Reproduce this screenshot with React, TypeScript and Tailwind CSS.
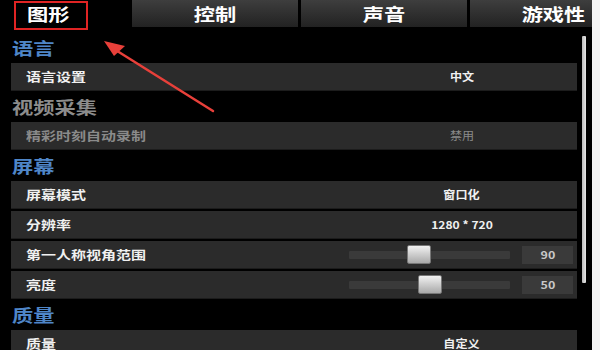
const font = { fontFamily: '"Noto Sans CJK SC", "Noto Sans", sans-serif' };

type Item =
  | { kind: "heading"; label: string; muted?: boolean }
  | { kind: "row"; label: string; value: string; muted?: boolean }
  | { kind: "slider"; label: string; value: number; pos: number };

const items: Item[] = [
  { kind: "heading", label: "语言" },
  { kind: "row", label: "语言设置", value: "中文" },
  { kind: "heading", label: "视频采集", muted: true },
  { kind: "row", label: "精彩时刻自动录制", value: "禁用", muted: true },
  { kind: "heading", label: "屏幕" },
  { kind: "row", label: "屏幕模式", value: "窗口化" },
  { kind: "row", label: "分辨率", value: "1280 * 720" },
  { kind: "slider", label: "第一人称视角范围", value: 90, pos: 58 },
  { kind: "slider", label: "亮度", value: 50, pos: 69 },
  { kind: "heading", label: "质量" },
  { kind: "row", label: "质量", value: "自定义" },
];

const tabs = ["控制", "声音", "游戏性"];

const Slider = ({ value, pos }: { value: number; pos: number }) => (
  <div className="flex items-center h-full">
    <div className="relative w-[161px] h-[8px] bg-[#3a3a3a] rounded-[1px]">
      <div
        className="absolute top-[-6px] w-[24px] h-[19px] rounded-[2px] bg-gradient-to-b from-[#f2f2f2] to-[#a9a9a9] border border-[#777]"
        style={{ left: pos }}
      />
    </div>
    <div className="ml-[12px] w-[51px] h-[18px] bg-[#3a3a3a] flex items-center justify-center text-[10px] font-bold text-[#c8c8c8]">
      <span className="inline-block scale-x-125">{value}</span>
    </div>
  </div>
);

export default function App() {
  return (
    <div className="relative w-[600px] h-[350px] overflow-hidden flex bg-[#f5f5f5]" style={font}>
      <div className="w-[592px] h-full bg-black flex flex-col overflow-hidden">
        {/* tab bar */}
        <div className="flex h-[27px] shrink-0 gap-[3px]">
          <div className="w-[129px] shrink-0 bg-black flex items-center pl-[27px] text-[17px] font-bold text-white">
            <span className="inline-block scale-x-125 origin-left">图形</span>
          </div>
          {tabs.map((t) => (
            <div
              key={t}
              className="w-[166px] shrink-0 bg-gradient-to-b from-[#3e3e3e] to-[#222] flex items-center justify-center text-[17px] font-bold text-white"
            >
              <span className="inline-block scale-x-125">{t}</span>
            </div>
          ))}
        </div>

        <div className="flex flex-1 min-h-0">
          <div className="w-[577px] pl-[11px] pt-[7px] flex flex-col gap-[2px]">
            {items.map((it, i) => {
              if (it.kind === "heading") {
                return (
                  <div
                    key={i}
                    className={`h-[27px] shrink-0 flex items-center pl-[1px] text-[17px] font-bold ${
                      it.muted ? "text-[#8c8c8c]" : "text-[#4f86c8]"
                    }`}
                  >
                    <span className="inline-block scale-x-125 origin-left">{it.label}</span>
                  </div>
                );
              }
              return (
                <div
                  key={i}
                  className="h-[28px] shrink-0 bg-[#2b2b2b] border-b border-[#1c1c1c] flex items-center text-[12px] font-bold"
                >
                  <div
                    className={`w-[338px] pl-[15px] ${
                      it.kind === "row" && it.muted ? "text-[#8a8a8a]" : "text-[#f0f0f0]"
                    }`}
                  >
                    <span className="inline-block scale-x-125 origin-left">{it.label}</span>
                  </div>
                  {it.kind === "row" ? (
                    <div
                      className={`w-[232px] text-center text-[11px] ${
                        it.muted ? "text-[#8a8a8a] font-normal" : "text-[#f0f0f0]"
                      }`}
                    >
                      <span className="inline-block scale-x-110">{it.value}</span>
                    </div>
                  ) : (
                    <Slider value={it.value} pos={it.pos} />
                  )}
                </div>
              );
            })}
          </div>
          <div className="flex-1 pt-[9px] pl-[5px]">
            <div className="w-[4px] h-[247px] bg-gradient-to-r from-[#bbb] to-[#e6e6e6] rounded-[1px]" />
          </div>
        </div>
      </div>

      {/* annotation overlay */}
      <div className="absolute left-[14px] top-[1px] w-[74px] h-[29px] border-2 border-[#e02424]" />
      <svg className="absolute left-0 top-0" width="600" height="350" viewBox="0 0 600 350">
        <line x1="213" y1="111" x2="114" y2="49" stroke="#e8403a" strokeWidth="2.5" strokeLinecap="round" />
        <polygon points="104,41 125,46 114,56" fill="#e8403a" />
      </svg>
    </div>
  );
}
